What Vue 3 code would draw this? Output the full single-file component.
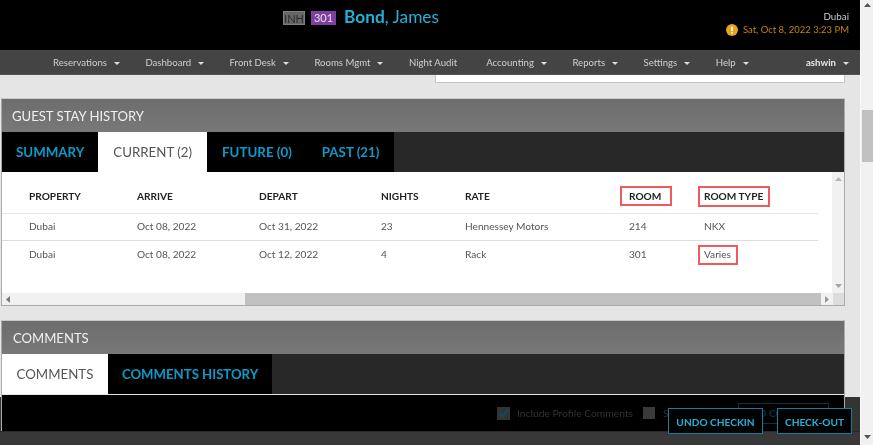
<script setup>
const menu = [
  { label: 'Reservations', caret: true },
  { label: 'Dashboard', caret: true },
  { label: 'Front Desk', caret: true },
  { label: 'Rooms Mgmt', caret: true },
  { label: 'Night Audit', caret: false },
  { label: 'Accounting', caret: true },
  { label: 'Reports', caret: true },
  { label: 'Settings', caret: true },
  { label: 'Help', caret: true }
]
const stayTabs = [
  { label: 'SUMMARY', active: false },
  { label: 'CURRENT (2)', active: true },
  { label: 'FUTURE (0)', active: false },
  { label: 'PAST (21)', active: false }
]
const rows = [
  { property: 'Dubai', arrive: 'Oct 08, 2022', depart: 'Oct 31, 2022', nights: '23', rate: 'Hennessey Motors', room: '214', type: 'NKX', mark: false },
  { property: 'Dubai', arrive: 'Oct 08, 2022', depart: 'Oct 12, 2022', nights: '4', rate: 'Rack', room: '301', type: 'Varies', mark: true }
]
</script>

<template>
  <div class="app">
    <div class="main">
      <header class="header">
        <div class="identity">
          <span class="badge inh">INH</span>
          <span class="badge room">301</span>
          <span class="guest"><b>Bond</b>, James</span>
        </div>
        <div class="where">
          <div class="city">Dubai</div>
          <div class="date">
            <svg class="alert" viewBox="0 0 12 12" width="12" height="12">
              <circle cx="6" cy="6" r="6" fill="#e8a21c" />
              <rect x="5.1" y="2.4" width="1.8" height="4.8" rx=".6" fill="#fff" />
              <rect x="5.1" y="8" width="1.8" height="1.7" rx=".6" fill="#fff" />
            </svg>
            <span>Sat, Oct 8, 2022 3:23 PM</span>
          </div>
        </div>
      </header>

      <nav class="nav">
        <span v-for="m in menu" :key="m.label" class="nav-item" :class="{ plain: !m.caret }">
          {{ m.label }}<i v-if="m.caret" class="caret"></i>
        </span>
        <span class="nav-user">ashwin<i class="caret"></i></span>
      </nav>

      <div class="foot-bar"></div>

      <div class="content">
        <div class="stub"></div>

        <section class="panel stay">
          <h2 class="panel-title">GUEST STAY HISTORY</h2>
          <div class="tabs">
            <span v-for="t in stayTabs" :key="t.label" class="tab" :class="{ active: t.active }">{{ t.label }}</span>
          </div>
          <div class="table-box">
            <div class="table-view">
              <table class="grid">
                <colgroup>
                  <col class="c1" /><col class="c2" /><col class="c3" /><col class="c4" /><col class="c5" /><col class="c6" /><col class="c7" />
                </colgroup>
                <thead>
                  <tr>
                    <th>PROPERTY</th>
                    <th>ARRIVE</th>
                    <th>DEPART</th>
                    <th>NIGHTS</th>
                    <th>RATE</th>
                    <th><span class="mark m-room">ROOM</span></th>
                    <th><span class="mark m-type">ROOM TYPE</span></th>
                  </tr>
                </thead>
                <tbody>
                  <tr v-for="r in rows" :key="r.depart">
                    <td>{{ r.property }}</td>
                    <td>{{ r.arrive }}</td>
                    <td>{{ r.depart }}</td>
                    <td>{{ r.nights }}</td>
                    <td>{{ r.rate }}</td>
                    <td>{{ r.room }}</td>
                    <td><span :class="{ mark: r.mark, 'm-varies': r.mark }">{{ r.type }}</span></td>
                  </tr>
                </tbody>
              </table>
              <div class="vbar">
                <svg viewBox="0 0 7 4" width="7" height="4"><polygon points="3.5,0 7,4 0,4" fill="#b5b5b5" /></svg>
                <svg viewBox="0 0 7 4" width="7" height="4"><polygon points="0,0 7,0 3.5,4" fill="#a5a5a5" /></svg>
              </div>
            </div>
            <div class="hbar">
              <span class="harrow">
                <svg viewBox="0 0 4 7" width="4" height="7"><polygon points="4,0 4,7 0,3.5" fill="#777" /></svg>
              </span>
              <span class="hthumb"></span>
              <span class="harrow">
                <svg viewBox="0 0 4 7" width="4" height="7"><polygon points="0,0 4,3.5 0,7" fill="#999" /></svg>
              </span>
              <span class="hcorner"></span>
            </div>
          </div>
        </section>

        <section class="panel comments">
          <h2 class="panel-title">COMMENTS</h2>
          <div class="tabs">
            <span class="tab active">COMMENTS</span>
            <span class="tab">COMMENTS HISTORY</span>
          </div>
          <div class="comment-body">
            <svg class="check" viewBox="0 0 13 13" width="13" height="13">
              <rect width="13" height="13" fill="#333" />
              <path d="M2.6 6.6 5.3 9.6 10.6 2.8" fill="none" stroke="#0b4c63" stroke-width="2.2" />
            </svg>
            <span class="dim-label">Include Profile Comments</span>
            <span class="dim-box"></span>
            <span class="dim-label s">S</span>
            <span class="dim-btn">ADD COMMENT</span>
          </div>
        </section>
      </div>

      <div class="foot-strip"></div>
      <div class="actions">
        <button class="act undo">UNDO CHECKIN</button>
        <button class="act out">CHECK-OUT</button>
      </div>
    </div>

    <aside class="page-bar">
      <svg viewBox="0 0 7 4" width="7" height="4"><polygon points="3.5,0 7,4 0,4" fill="#555" /></svg>
      <span class="page-thumb"></span>
      <svg class="down" viewBox="0 0 7 4" width="7" height="4"><polygon points="0,0 7,0 3.5,4" fill="#555" /></svg>
    </aside>
  </div>
</template>

<style>
html, body { margin: 0; background: #e5e5e5; }
</style>

<style scoped>
.app {
  display: flex;
  width: 873px;
  height: 445px;
  overflow: hidden;
  font-family: Lato, "Open Sans", sans-serif;
  filter: blur(0.35px);
}
.main {
  position: relative;
  display: flex;
  flex-direction: column;
  width: 860px;
  height: 445px;
  overflow: hidden;
  background: #e5e5e5;
}

/* header */
.header {
  display: flex;
  justify-content: space-between;
  flex: 0 0 50px;
  background: #000;
  box-sizing: border-box;
  padding: 0 11px 0 283px;
}
.identity { display: flex; align-items: center; height: 35px; }
.badge {
  box-sizing: border-box;
  height: 14px;
  font-size: 11px;
  line-height: 13px;
  text-align: center;
}
.inh { width: 22px; background: #666; color: #2b2b2b; border: 1px solid #7e7e7e; }
.room { width: 25px; margin-left: 6px; background: #7f3f9f; color: #e9dcf0; }
.guest { margin: -2px 0 0 8px; font-size: 17.3px; color: #1fb3dc; line-height: 22px; }
.guest b { font-weight: 700; }
.where { text-align: right; padding-top: 9px; }
.city { font-size: 9.8px; line-height: 14px; color: #c9c9c9; }
.date {
  display: flex;
  align-items: center;
  gap: 5px;
  font-size: 9.5px;
  line-height: 14px;
  color: #c5830a;
}
.alert { display: block; }

/* nav */
.nav {
  display: flex;
  align-items: center;
  flex: 0 0 25px;
  box-sizing: border-box;
  padding: 0 11px 0 53px;
  background: #444;
  border-bottom: 1px solid #555;
  font-size: 9.6px;
  color: #cfcfcf;
}
.nav-item { display: flex; align-items: center; margin-right: 25.5px; white-space: nowrap; }
.nav-item.plain { margin-right: 29px; }
.nav-user { display: flex; align-items: center; margin-left: auto; font-weight: 700; color: #e6e6e6; }
.caret {
  display: block;
  width: 0;
  height: 0;
  margin-left: 7px;
  margin-top: 2px;
  border-left: 3px solid transparent;
  border-right: 3px solid transparent;
  border-top: 3px solid #ddd;
}

/* footer bar, behind the panels */
.foot-bar {
  position: absolute;
  left: 0;
  right: 0;
  bottom: 0;
  height: 48px;
  background: #333;
}

/* content */
.content {
  position: relative;
  flex: 1;
  min-height: 0;
  padding: 0 15px 0 1px;
  overflow: hidden;
}
.stub {
  height: 8px;
  margin: 0 0 15px 434px;
  box-sizing: border-box;
  background: #fff;
  border: 1px solid #c4c4c4;
  border-top: 0;
}
.panel {
  box-sizing: border-box;
  border: 1px solid #aaa;
  border-top-color: #c8c8c8;
}
.panel + .panel { margin-top: 14px; }
.panel-title {
  box-sizing: border-box;
  height: 33px;
  margin: 0;
  padding: 0 0 0 10px;
  background: linear-gradient(#6d6d6d, #787878);
  font-size: 13.1px;
  font-weight: 400;
  line-height: 35px;
  color: #f0f0f0;
}
.comments .panel-title { padding-left: 11px; }
.tabs {
  display: flex;
  height: 40px;
  background: #282828;
}
.tab {
  box-sizing: border-box;
  padding: 0 15px;
  background: #000;
  font-size: 13.3px;
  font-weight: 700;
  line-height: 40px;
  color: #0b9bcb;
  white-space: nowrap;
}
.tab.active { background: #fff; color: #555; font-weight: 400; }
.stay .tab:first-child { padding: 0 14px; }
.comments .tab { padding: 0 14px; font-size: 13.2px; }
.comments .tab.active { padding: 0 14.5px; font-size: 13.3px; }

/* table */
.table-box { height: 133px; background: #fff; }
.table-view { position: relative; height: 121px; overflow: hidden; }
.grid {
  table-layout: fixed;
  width: 816px;
  border-collapse: collapse;
  font-size: 10.15px;
}
.c1 { width: 135px; }
.c2, .c3 { width: 122px; }
.c4 { width: 84px; }
.c5 { width: 164px; }
.c6 { width: 75px; }
.c7 { width: 114px; }
.grid th, .grid td { padding: 0; text-align: left; }
.grid th:first-child, .grid td:first-child { padding-left: 27px; }
.grid th {
  height: 41px;
  font-weight: 700;
  color: #222;
  border-bottom: 1px solid #e6e6e6;
  padding-top: 7px;
  box-sizing: border-box;
}
.grid td {
  height: 27px;
  padding-bottom: 1px;
  box-sizing: border-box;
  color: #555;
  border-bottom: 1px solid #ddd;
}
.grid tr:last-child td { border-bottom: 0; padding-bottom: 0; padding-top: 1px; }
.mark { position: relative; display: inline-block; }
.mark::after {
  content: "";
  position: absolute;
  border: 2px solid #ef5a5e;
  box-sizing: border-box;
}
.m-room::after { left: -9px; top: -4px; width: 52px; height: 20px; }
.m-type::after { left: -6px; top: -4px; width: 72px; height: 21px; }
.m-varies::after { left: -6px; top: -3px; width: 40px; height: 20px; }
.vbar {
  position: absolute;
  top: 0;
  right: 0;
  bottom: 0;
  display: flex;
  flex-direction: column;
  align-items: center;
  justify-content: space-between;
  box-sizing: border-box;
  width: 12px;
  padding: 5px 0 5px;
  background: #f1f1f1;
}
.hbar { display: flex; align-items: stretch; height: 12px; background: #f1f1f1; }
.harrow { display: flex; align-items: center; justify-content: center; width: 12px; }
.hthumb { width: 576px; margin-left: 231px; background: #c1c1c1; }
.hcorner { flex: 1; background: #dcdcdc; }

/* comment body */
.comments { height: 140px; border-bottom: 0; }
.comment-body {
  display: flex;
  align-items: center;
  height: 36px;
  margin-top: 1px;
  padding: 0 15px 0 495px;
  background: #000;
}
.check { flex: none; }
.dim-label { margin-left: 7px; font-size: 10.3px; color: #333; white-space: nowrap; }
.dim-box { flex: none; width: 12px; height: 12px; margin-left: 10px; background: #3a3a3a; }
.dim-label.s { margin-left: 8px; }
.dim-btn {
  box-sizing: border-box;
  width: 91px;
  height: 21px;
  margin-left: auto;
  border: 1px solid #0a3240;
  font-size: 10.3px;
  font-weight: 700;
  line-height: 19px;
  text-align: center;
  color: #0a3240;
  white-space: nowrap;
  overflow: hidden;
}

/* footer overlay */
.foot-strip {
  position: absolute;
  left: 0;
  right: 0;
  bottom: 0;
  height: 14px;
  background: #383838;
  border-top: 1px solid #2a2a2a;
  box-sizing: border-box;
}
.actions {
  position: absolute;
  right: 8px;
  bottom: 11px;
  display: flex;
  gap: 14px;
}
.act {
  box-sizing: border-box;
  height: 26px;
  padding: 1px 0 0;
  background: #000;
  border: 1px solid #0d7f9f;
  font-family: inherit;
  font-size: 10.15px;
  font-weight: 700;
  color: #1fb3dc;
  white-space: nowrap;
}
.undo { width: 95px; }
.out { width: 75px; }

/* page scrollbar */
.page-bar {
  position: relative;
  display: flex;
  flex-direction: column;
  align-items: center;
  width: 13px;
  height: 445px;
  box-sizing: border-box;
  padding-top: 3px;
  background: #f1f1f1;
  border-left: 1px solid #f8f8f8;
}
.page-thumb {
  width: 11px;
  height: 52px;
  margin-top: 103px;
  background: #c1c1c1;
}
.down { margin-top: auto; margin-bottom: 6px; }
</style>
